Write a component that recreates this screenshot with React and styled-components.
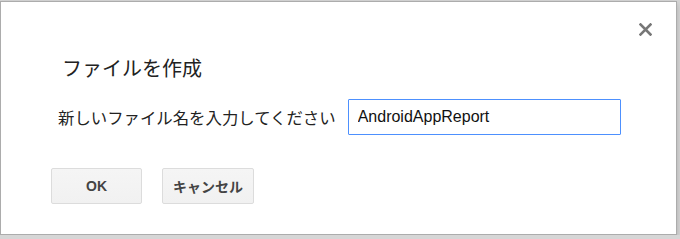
import React from 'react'
import styled, { createGlobalStyle } from 'styled-components'

const GlobalStyle = createGlobalStyle`
  html, body {
    margin: 0;
    padding: 0;
    background: #d6d6d6;
  }
  body {
    font-family: 'Liberation Sans', Arial, 'Noto Sans CJK JP', sans-serif;
    color: #222;
  }
`

export default function App() {
  return (
    <>
      <GlobalStyle />
      <Dialog>
        <CloseButton type="button" aria-label="閉じる">
          <svg width="13" height="13" viewBox="0 0 13 13">
            <path
              d="M1.5 1.5 L11.5 11.5 M11.5 1.5 L1.5 11.5"
              stroke="#777"
              strokeWidth="2.6"
              strokeLinecap="square"
            />
          </svg>
        </CloseButton>
        <Title>ファイルを作成</Title>
        <InputRow>
          <Label htmlFor="filename">新しいファイル名を入力してください</Label>
          <Input id="filename" defaultValue="AndroidAppReport" />
        </InputRow>
        <ButtonRow>
          <Button type="button">OK</Button>
          <Button type="button">キャンセル</Button>
        </ButtonRow>
      </Dialog>
    </>
  )
}

const Dialog = styled.div`
  position: relative;
  box-sizing: border-box;
  width: 677px;
  height: 234px;
  margin-top: 1px;
  padding: 54px 0 0 50px;
  background: #fff;
  border: 1px solid #acacac;
  box-shadow: 0 3px 6px rgba(0, 0, 0, 0.2);
`

const CloseButton = styled.button`
  position: absolute;
  top: 21px;
  right: 24px;
  width: 13px;
  height: 13px;
  padding: 0;
  border: none;
  background: none;
  display: flex;
  cursor: pointer;
`

const Title = styled.h1`
  margin: 0 0 0 11px;
  font-family: 'Noto Sans CJK JP', sans-serif;
  font-size: 20px;
  font-weight: 400;
  line-height: 24px;
  color: #222;
`

const InputRow = styled.div`
  display: flex;
  align-items: center;
  margin-top: 19px;
  margin-left: 7px;
  gap: 12px;
`

const Label = styled.label`
  font-family: 'Noto Sans CJK JP', sans-serif;
  font-size: 16.4px;
  line-height: 20px;
  color: #222;
  white-space: nowrap;
`

const Input = styled.input`
  box-sizing: border-box;
  width: 273px;
  height: 36px;
  padding: 0 9px;
  border: 1px solid #4d90fe;
  border-radius: 1px;
  font-family: 'Liberation Sans', Arial, sans-serif;
  font-size: 16px;
  color: #111;
  outline: none;
`

const ButtonRow = styled.div`
  display: flex;
  gap: 20px;
  margin-top: 33px;
`

const Button = styled.button`
  box-sizing: border-box;
  min-width: 91px;
  height: 36px;
  padding: 0 10px;
  border: 1px solid #dcdcdc;
  border-radius: 2px;
  background: linear-gradient(#f5f5f5, #f1f1f1);
  font-family: 'Liberation Sans', Arial, 'Noto Sans CJK JP', sans-serif;
  font-size: 14px;
  font-weight: 700;
  color: #444;
  cursor: pointer;
`
